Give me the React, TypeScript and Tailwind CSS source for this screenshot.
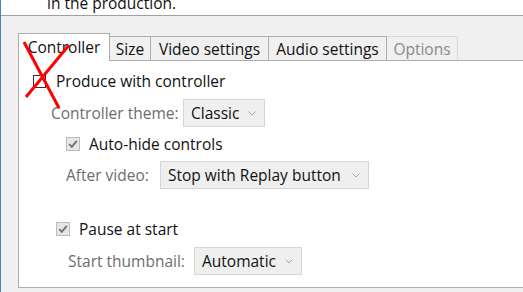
import React from "react";

const font = { fontFamily: '"Open Sans", "Noto Sans", sans-serif' };

function Chevron() {
  return (
    <svg width="8" height="5" viewBox="0 0 8 5" className="shrink-0">
      <path d="M0.5 0.5 L4 4 L7.5 0.5" fill="none" stroke="#a6a6a6" strokeWidth="1" />
    </svg>
  );
}

function Select({ text, w }: { text: string; w: string }) {
  return (
    <div
      className={`${w} h-[28px] flex items-center justify-between pl-[7px] pr-[8px] bg-[#efefef] border border-[#d6d6d6] text-[#111] text-[15.5px]`}
    >
      <span>{text}</span>
      <Chevron />
    </div>
  );
}

function CheckedBox() {
  return (
    <div className="w-[14px] h-[14px] shrink-0 border border-[#bcbcbc] bg-[#e6e6e6] flex items-center justify-center">
      <svg width="10" height="10" viewBox="0 0 10 10">
        <path d="M1.2 5.2 L3.8 7.8 L8.8 1.8" fill="none" stroke="#707070" strokeWidth="1.8" />
      </svg>
    </div>
  );
}

export default function App() {
  return (
    <div
      className="w-[523px] h-[292px] overflow-hidden bg-[#f0f0f0] relative flex flex-col border-l border-[#4a86c5]"
      style={font}
    >
      <div className="h-[16px] shrink-0 bg-white border-b border-[#a0a0a0] overflow-hidden">
        <div className="pl-[46px] mt-[-7px] text-[15.5px] leading-[20px] text-[#111]">in the production.</div>
      </div>

      <div className="ml-[17px] mt-[17px] flex flex-col">
        <div className="flex items-end h-[27px] text-[15.5px] leading-[20px]">
          <div className="relative z-10 mb-[-1px] w-[92px] h-[28px] bg-white border-t border-l border-r border-[#adadad] flex items-center justify-center text-[#111] pb-[1px]">
            Controller
          </div>
          <div className="w-[41px] h-[24px] bg-[#f0f0f0] border-t border-r border-[#adadad] flex items-center justify-center text-[#111]">
            Size
          </div>
          <div className="w-[118px] h-[24px] bg-[#f0f0f0] border-t border-r border-[#adadad] flex items-center justify-center text-[#111]">
            Video settings
          </div>
          <div className="w-[118px] h-[24px] bg-[#f0f0f0] border-t border-r border-[#adadad] flex items-center justify-center text-[#111]">
            Audio settings
          </div>
          <div className="w-[71px] h-[24px] bg-[#f0f0f0] border-t border-r border-[#d9d9d9] flex items-center justify-center text-[#8a8a8a]">
            Options
          </div>
        </div>

        <div className="w-[530px] h-[228px] bg-white border border-[#adadad] flex flex-col text-[15.5px] leading-[20px]">
          <div className="mt-[10px] h-[20px] flex items-center pl-[14px]">
            <div className="w-[13px] h-[13px] border border-[#333] bg-white shrink-0" />
            <span className="ml-[10px] text-[#111]">Produce with controller</span>
          </div>
          <div className="mt-[8px] h-[28px] flex items-center pl-[32px]">
            <span className="w-[132px] text-[#6d6d6d]">Controller theme:</span>
            <Select text="Classic" w="w-[82px]" />
          </div>
          <div className="mt-[7px] h-[20px] flex items-center pl-[47px]">
            <CheckedBox />
            <span className="ml-[9px] text-[#111]">Auto-hide controls</span>
          </div>
          <div className="mt-[7px] h-[28px] flex items-center pl-[47px]">
            <span className="w-[94px] text-[#6d6d6d]">After video:</span>
            <Select text="Stop with Replay button" w="w-[209px]" />
          </div>
          <div className="mt-[30px] h-[20px] flex items-center pl-[37px]">
            <CheckedBox />
            <span className="ml-[9px] text-[#111]">Pause at start</span>
          </div>
          <div className="mt-[8px] h-[28px] flex items-center pl-[49px]">
            <span className="w-[126px] text-[#6d6d6d]">Start thumbnail:</span>
            <Select text="Automatic" w="w-[108px]" />
          </div>
        </div>
      </div>

      <svg className="absolute left-0 top-0 z-20 pointer-events-none" width="100" height="120">
        <line x1="23" y1="42" x2="58" y2="108" stroke="#ff0000" strokeWidth="3" />
        <line x1="68" y1="45" x2="25" y2="97" stroke="#ff0000" strokeWidth="3" />
      </svg>
    </div>
  );
}
